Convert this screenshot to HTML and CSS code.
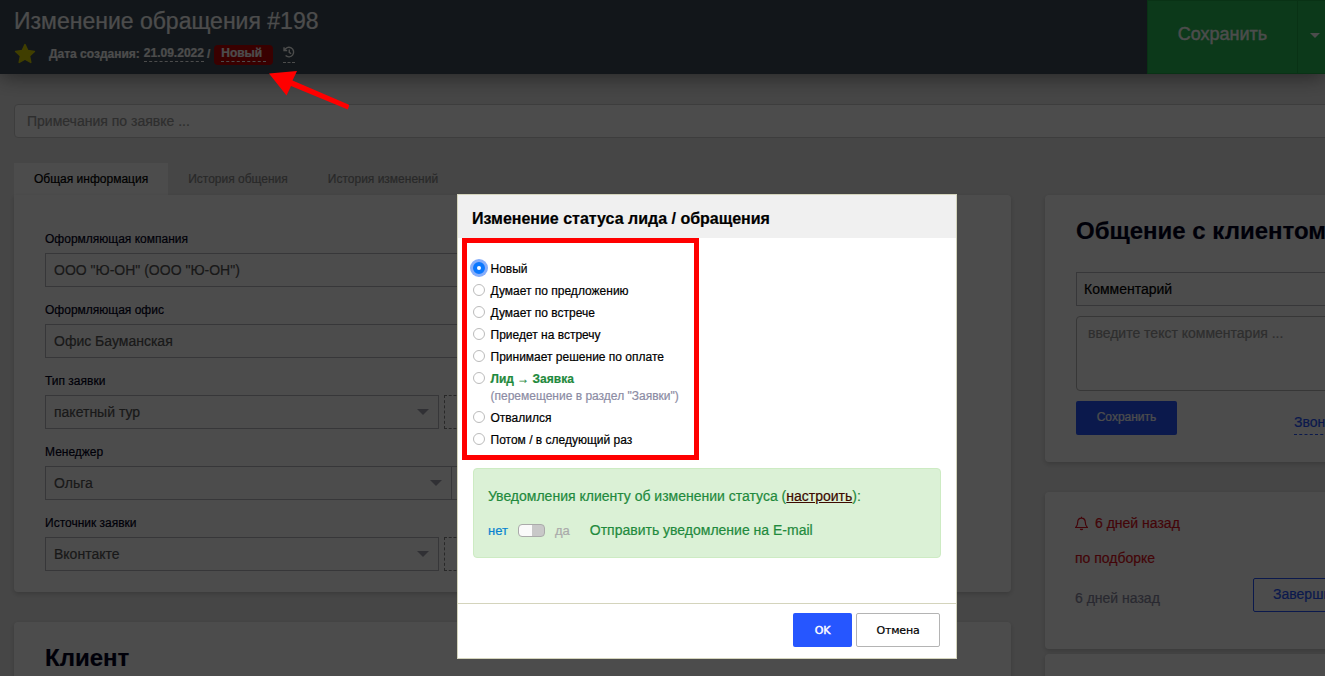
FILE: index.html
```html
<!DOCTYPE html>
<html lang="ru">
<head>
    <meta charset="UTF-8">
    <meta name="viewport" content="width=device-width, initial-scale=1.0">
    <title>Изменение обращения #198</title>
    <link rel="stylesheet" href="styles.css">
</head>
<body>

<header class="header">
    <div class="header-info">
        <h1>Изменение обращения #198</h1>
        <div class="header-meta">
            <svg class="star" viewBox="0 0 22 22"><path d="M11 1.6l2.8 6 6.6.8-4.9 4.5 1.3 6.5-5.8-3.2-5.8 3.2 1.3-6.5L1.6 8.4l6.6-.8z"/></svg>
            <span>Дата создания:</span>
            <a class="dashed date">21.09.2022</a>
            <span class="slash">/</span>
            <span class="status"><a class="dashed">Новый&nbsp;</a></span>
            <a class="dashed history">
                <svg viewBox="0 0 14 14"><path d="M1.2 1.5v3.7h3.7M1.6 5A5.6 5.600 0 1 1 3 11.2M7.300 4v3.400l2.200 1.700"/></svg>
            </a>
        </div>
    </div>
    <div class="save-group">
        <button class="save">Сохранить</button>
        <button class="save-more"><i class="caret"></i></button>
    </div>
</header>

<main class="page">
    <input class="notes" type="text" placeholder="Примечания по заявке ...">

    <nav class="tabs">
        <a class="tab active">Общая информация</a>
        <a class="tab">История общения</a>
        <a class="tab">История изменений</a>
    </nav>

    <div class="columns">
        <div class="column-left">
            <section class="panel main-panel">
                <div class="field">
                    <label>Оформляющая компания</label>
                    <div class="row"><div class="control wide">ООО "Ю-ОН" (ООО "Ю-ОН")</div></div>
                </div>
                <div class="field">
                    <label>Оформляющая офис</label>
                    <div class="row"><div class="control wide">Офис Бауманская</div></div>
                </div>
                <div class="field">
                    <label>Тип заявки</label>
                    <div class="row">
                        <div class="control select">пакетный тур<i class="arrow"></i></div>
                        <div class="add"></div>
                    </div>
                </div>
                <div class="field">
                    <label>Менеджер</label>
                    <div class="row joined">
                        <div class="control select manager">Ольга<i class="arrow"></i></div>
                        <div class="control side"></div>
                    </div>
                </div>
                <div class="field">
                    <label>Источник заявки</label>
                    <div class="row">
                        <div class="control select">Вконтакте<i class="arrow"></i></div>
                        <div class="add"></div>
                    </div>
                </div>
            </section>
            <section class="panel client-panel">
                <h2>Клиент</h2>
            </section>
        </div>

        <div class="column-right">
            <section class="panel talk-panel">
                <h2>Общение с клиентом</h2>
                <div class="control comment-type">Комментарий</div>
                <textarea class="comment" placeholder="введите текст комментария ..."></textarea>
                <div class="talk-actions">
                    <button class="btn-blue">Сохранить</button>
                    <a class="call">Звонок</a>
                </div>
            </section>
            <section class="panel task-panel">
                <div class="task-date">
                    <svg class="bell" viewBox="0 0 13 15"><path d="M.7 11.5h11.6c-1.4-1.3-2-2.6-2-5.2 0-2.6-1.6-4.2-3.8-4.2S2.7 3.700 2.700 6.300c0 2.600-.6 3.900-2 5.200zM6.500 2V.7"/><path class="fill" d="M4.800 12.700h3.400a1.700 1.500 0 0 1-3.400 0z"/></svg>
                    <span>6 дней назад</span>
                </div>
                <div class="task-text">по подборке</div>
                <div class="task-bottom">
                    <span>6 дней назад</span>
                    <button class="btn-outline">Завершить</button>
                </div>
            </section>
            <section class="panel next-panel"></section>
        </div>
    </div>
</main>

<div class="overlay"></div>

<div class="modal">
    <div class="modal-header">Изменение статуса лида / обращения</div>
    <div class="modal-body">
        <div class="statuses">
            <label class="option"><i class="radio checked"></i><span>Новый</span></label>
            <label class="option"><i class="radio"></i><span>Думает по предложению</span></label>
            <label class="option"><i class="radio"></i><span>Думает по встрече</span></label>
            <label class="option"><i class="radio"></i><span>Приедет на встречу</span></label>
            <label class="option"><i class="radio"></i><span>Принимает решение по оплате</span></label>
            <label class="option"><i class="radio"></i><span><b>Лид → Заявка</b><small>(перемещение в раздел "Заявки")</small></span></label>
            <label class="option"><i class="radio"></i><span>Отвалился</span></label>
            <label class="option"><i class="radio"></i><span>Потом / в следующий раз</span></label>
        </div>
        <div class="notice">
            <div class="notice-title">Уведомления клиенту об изменении статуса (<a>настроить</a>):</div>
            <div class="notice-row">
                <span class="no">нет</span>
                <i class="switch"></i>
                <span class="yes">да</span>
                <span class="notice-label">Отправить уведомление на E-mail</span>
            </div>
        </div>
    </div>
    <div class="modal-footer">
        <button class="ok">OK</button>
        <button class="cancel">Отмена</button>
    </div>
</div>

<div class="highlight"></div>
<svg class="pointer" viewBox="0 0 80 40"><path d="M0 2.500L28 0l-4.500 9.500L80.500 34l-1.700 4.600L22 15l-4.500 9.500z"/></svg>

</body>
</html>
```

FILE: styles.css
```css
* {
    box-sizing: border-box;
}
body {
    font-family: "Liberation Sans", Arial, sans-serif;
    margin: 0;
    height: 676px;
    overflow: hidden;
    background-color: #ebebeb;
    font-size: 14px;
    color: #000;
    position: relative;
    -webkit-text-stroke: 0.2px;
}
button, input, textarea {
    font-family: inherit;
}
h2 {
    margin: 0;
    font-size: 24px;
    line-height: 28px;
    color: #000020;
    white-space: nowrap;
}
.header {
    display: flex;
    justify-content: space-between;
    height: 74px;
    background-color: #3c4c57;
    box-shadow: 0 2px 20px rgba(0, 0, 0, 0.5);
}
.header-info {
    padding: 7px 0 0 14px;
}
h1 {
    margin: 0;
    font-size: 23px;
    font-weight: normal;
    line-height: 28px;
    color: #fff;
}
.header-meta {
    display: flex;
    align-items: center;
    height: 22px;
    margin-top: 8px;
    font-size: 12px;
    font-weight: bold;
    color: #fff;
}
.star {
    width: 22px;
    height: 22px;
    margin-right: 13px;
    fill: #d8d000;
    stroke: #d8d000;
    stroke-width: 1.5;
    stroke-linejoin: round;
}
.dashed {
    border-bottom: 1px dashed #fff;
    line-height: 15px;
}
.date {
    margin-left: 4px;
}
.slash {
    margin: 0 4px 0 3px;
}
.status {
    display: flex;
    height: 20px;
    margin-top: 2px;
    padding: 1px 7px 0;
    border-radius: 4px;
    background-color: #c00000;
}
.status .dashed {
    height: 16px;
}
.history {
    margin: 1px 0 0 10px;
    height: 17px;
}
.history svg {
    display: block;
    width: 12px;
    height: 12px;
    fill: none;
    stroke: #fff;
    stroke-width: 1.6;
}
.save-group {
    display: flex;
    width: 178px;
}
.save, .save-more {
    flex: none;
    padding: 0;
    border: 1px solid #20a848;
    background-color: #28be57;
    color: #fff;
}
.save {
    width: 150px;
    padding-bottom: 6px;
    border-right: none;
    font-size: 18px;
    -webkit-text-stroke: 0.4px;
}
.save-more {
    display: flex;
    width: 36px;
    padding: 32px 0 0 12px;
}
.caret {
    border: 5px solid transparent;
    border-top-color: #fff;
    border-bottom: none;
}
.page {
    padding: 30px 0 0 14px;
}
.notes {
    display: block;
    width: 1340px;
    height: 34px;
    padding: 0 12px;
    border: 1px solid #ccc;
    border-radius: 4px;
    background-color: #fff;
    font-size: 14px;
}
.notes::placeholder, .comment::placeholder {
    color: #999;
}
.tabs {
    display: flex;
    height: 32px;
    margin-top: 25px;
}
.tab {
    padding: 0 20px;
    font-size: 12px;
    line-height: 32px;
    color: #888;
}
.tab.active {
    background-color: #fff;
    color: #000;
}
.columns {
    display: grid;
    grid-template-columns: 997px 400px;
    column-gap: 34px;
}
.panel {
    border-radius: 4px;
    background-color: #fff;
    box-shadow: 0 2px 5px rgba(0, 0, 0, 0.18);
}
.main-panel {
    height: 397px;
    padding: 34px 31px 0;
    border-top-left-radius: 0;
}
.field {
    margin-bottom: 13px;
}
.field label {
    display: block;
    margin-bottom: 4px;
    font-size: 12px;
    line-height: 20px;
    color: #000020;
}
.row {
    display: flex;
    gap: 5px;
}
.row.joined {
    gap: 0;
}
.control {
    display: flex;
    align-items: center;
    justify-content: space-between;
    height: 34px;
    padding: 0 8px;
    border: 1px solid #b8b8c0;
    color: #555;
}
.control.wide {
    width: 450px;
}
.control.select {
    width: 394px;
    padding-right: 9px;
}
.control.manager {
    width: 407px;
}
.side {
    width: 36px;
    border-left: none;
}
.arrow {
    border: 6px solid transparent;
    border-top-color: #a0a0b0;
    border-bottom: none;
}
.add {
    width: 36px;
    height: 34px;
    border: 1px dashed #888;
}
.client-panel {
    height: 100px;
    margin-top: 30px;
    padding: 22px 31px;
}
.talk-panel {
    height: 267px;
    padding: 22px 31px 0;
}
.talk-panel .comment-type {
    margin-top: 27px;
    padding-left: 7px;
    color: #000;
}
.comment {
    display: block;
    width: 100%;
    height: 75px;
    margin-top: 10px;
    padding: 8px 11px;
    border: 1px solid #b8b8b8;
    border-radius: 4px;
    font-size: 14px;
    resize: none;
}
.talk-actions {
    display: flex;
    margin-top: 10px;
}
.btn-blue {
    width: 101px;
    height: 34px;
    padding: 0 0 2px;
    border: none;
    border-radius: 2px;
    background-color: #2656ff;
    color: #fff;
    font-size: 12px;
}
.call {
    height: 34px;
    margin-left: 117px;
    padding-top: 13px;
    border-bottom: 1px dashed #2656ff;
    color: #2656ff;
}
.task-panel {
    height: 157px;
    margin-top: 30px;
    padding: 22px 31px 0 30px;
    color: #e01020;
}
.task-date {
    display: flex;
    align-items: center;
    height: 18px;
}
.bell {
    width: 13px;
    height: 15px;
    margin-right: 7px;
    fill: none;
    stroke: #e01020;
    stroke-width: 1.2;
}
.bell .fill {
    fill: #e01020;
    stroke: none;
}
.task-text {
    margin-top: 17px;
    line-height: 18px;
}
.task-bottom {
    display: flex;
    margin-top: 11px;
    color: #8888a0;
}
.task-bottom span {
    width: 178px;
    padding-top: 12px;
}
.btn-outline {
    width: 112px;
    height: 34px;
    padding: 0 0 2px;
    border: 1px solid #2656ff;
    border-radius: 2px;
    background-color: #fff;
    color: #2656ff;
    font-size: 14px;
}
.next-panel {
    height: 60px;
    margin-top: 5px;
}
.overlay {
    position: absolute;
    inset: 0;
    background-color: rgba(0, 0, 0, 0.7);
}
.modal {
    position: absolute;
    left: 457px;
    top: 194px;
    display: flex;
    flex-direction: column;
    width: 500px;
    height: 465px;
    border: 1px solid #d4d4bc;
    background-color: #fff;
}
.modal-header {
    height: 43px;
    padding-left: 14px;
    background-color: #f0f0f0;
    font-size: 16px;
    font-weight: bold;
    line-height: 47px;
}
.modal-body {
    flex: 1;
    padding: 20px 15px 0;
}
.statuses {
    font-size: 12px;
}
.option {
    display: flex;
    min-height: 22px;
    line-height: 22px;
}
.radio {
    width: 12px;
    height: 12px;
    margin: 4px 5.5px 0 0;
    border: 1px solid #bbb;
    border-radius: 50%;
    background-color: #fff;
}
.radio.checked {
    border: 4px solid #0a78ff;
    box-shadow: 0 0 0 3px #86aefb;
}
.option b {
    display: block;
    color: #1f8a3d;
}
.option small {
    display: block;
    margin-top: -4px;
    padding-bottom: 1px;
    font-size: 12px;
    line-height: 20px;
    color: #8c8ca4;
}
.notice {
    height: 90px;
    margin-top: 17px;
    padding: 17px 14px 0;
    border: 1px solid #cdebc3;
    border-radius: 4px;
    background-color: #dbf1d6;
    color: #1f8a3d;
}
.notice-title {
    line-height: 20px;
}
.notice-title a {
    color: #3c0a00;
    text-decoration: underline;
}
.notice-row {
    display: flex;
    align-items: center;
    height: 20px;
    margin-top: 14px;
}
.no {
    font-size: 13px;
    color: #0a84d0;
}
.switch {
    width: 27px;
    height: 13px;
    margin: 1px 10px 0;
    border: 1px solid #aaa;
    border-radius: 4px;
    background: linear-gradient(to right, #fafafa 13px, #c8c8c8 13px);
}
.yes {
    margin-right: 20px;
    font-size: 13px;
    color: #aaa;
}
.modal-footer {
    display: flex;
    justify-content: flex-end;
    gap: 4px;
    height: 55px;
    padding: 9px 16px 0 0;
    border-top: 1px solid #d4d4bc;
}
.ok, .cancel {
    height: 34px;
    padding: 0;
    border-radius: 2px;
    font-family: "DejaVu Sans", Verdana, sans-serif;
    font-size: 11px;
    letter-spacing: -0.2px;
}
.ok {
    width: 59px;
    border: none;
    background-color: #2656ff;
    color: #fff;
    -webkit-text-stroke: 0.4px;
}
.cancel {
    width: 84px;
    border: 1px solid #b4b4b4;
    background-color: #fff;
    color: #000;
}
/* Red callouts over the status list and the status label */
.highlight {
    position: absolute;
    left: 462px;
    top: 238px;
    width: 237px;
    height: 222px;
    border: 5px solid #f00;
}
.pointer {
    position: absolute;
    left: 269px;
    top: 71px;
    width: 80px;
    height: 40px;
    fill: #f00;
}
```
